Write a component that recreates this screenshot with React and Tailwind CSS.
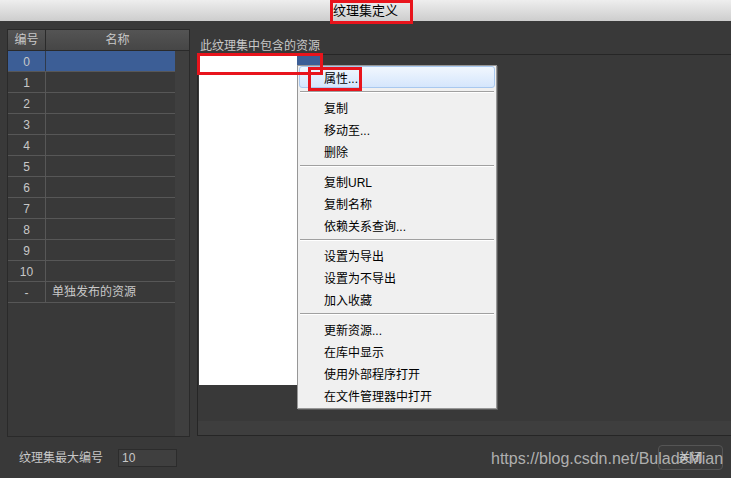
import React from "react";

const font = { fontFamily: '"Liberation Sans", "Noto Sans CJK SC", sans-serif' };

const rows = ["0", "1", "2", "3", "4", "5", "6", "7", "8", "9", "10", "-"];

const menu = [
  ["属性..."],
  ["复制", "移动至...", "删除"],
  ["复制URL", "复制名称", "依赖关系查询..."],
  ["设置为导出", "设置为不导出", "加入收藏"],
  ["更新资源...", "在库中显示", "使用外部程序打开", "在文件管理器中打开"],
];

function Menu() {
  return (
    <div className="absolute left-[297px] top-[65px] w-[200px] bg-[#f0f0f0] border border-[#979797] shadow-[1px_1px_0_#5a5a5a] px-[1px] pb-[2px] text-[12px] text-black flex flex-col">
      {menu.map((group, gi) => (
        <React.Fragment key={gi}>
          {gi > 0 && (
            <div className="h-[8px] flex flex-col justify-center px-[1px]">
              <div className="h-[1px] bg-[#a0a0a0]" />
              <div className="h-[1px] bg-white" />
            </div>
          )}
          {group.map((item, ii) => {
            const hi = gi === 0 && ii === 0;
            return (
              <div
                key={item}
                className={
                  "h-[22px] flex items-center pl-[24px] pt-[3px] leading-none " +
                  (hi
                    ? "bg-gradient-to-b from-[#f1f7fe] to-[#d5e6fc] border border-[#a8c8ef] rounded-[3px]"
                    : "border border-transparent")
                }
              >
                {item}
              </div>
            );
          })}
        </React.Fragment>
      ))}
    </div>
  );
}

export default function App() {
  return (
    <div
      className="relative w-[731px] h-[478px] overflow-hidden bg-[#393939] text-[12px] text-[#c8c8c8] flex flex-col"
      style={font}
    >
      {/* title bar */}
      <div className="h-[21px] bg-gradient-to-b from-[#eeeeee] to-[#cdcdcd] flex items-center justify-center text-[13px] text-black">
        纹理集定义
      </div>

      {/* body */}
      <div className="h-[416px] flex">
        {/* left panel */}
        <div className="ml-[7px] mt-[8px] w-[183px] h-[408px] border border-[#2a2a2a] flex flex-col">
          <div className="h-[21px] flex border-b border-[#2a2a2a] bg-gradient-to-b from-[#545454] to-[#464646]">
            <div className="w-[38px] border-r border-[#2a2a2a] flex items-center justify-center">编号</div>
            <div className="flex-1 flex items-center justify-center">名称</div>
          </div>
          <div className="flex-1 flex">
            <div className="w-[167px] flex flex-col">
              {rows.map((r, i) => (
                <div key={r} className="h-[21px] flex border-b border-[#575757]">
                  <div
                    className={
                      "w-[38px] border-r flex items-center justify-center pt-[1px] " +
                      (i === 0 ? "bg-[#3c5e96] border-[#2f3a4c]" : "border-[#575757]")
                    }
                  >
                    {r}
                  </div>
                  <div className={"flex-1 flex items-center pl-[6px] " + (i === 0 ? "bg-[#3c5e96]" : "")}>
                    {r === "-" ? "单独发布的资源" : ""}
                  </div>
                </div>
              ))}
            </div>
            <div className="flex-1 bg-[#3f3f3f]" />
          </div>
        </div>

        {/* right column */}
        <div className="ml-[7px] mt-[8px] flex-1 flex flex-col">
          <div className="h-[25px] flex items-end pl-[3px] leading-[16px]">此纹理集中包含的资源</div>
          <div className="h-[382px] border-t border-l border-b border-[#262626] flex flex-col">
            <div className="pl-[1px] pt-[1px] flex">
              <div className="w-[98px] h-[329px] bg-white" />
              <div className="w-[24px] h-[11px] bg-[#3c5e96]" />
            </div>
            <div className="flex-1" />
            <div className="h-[14px] bg-[#3e3e3e]" />
          </div>
        </div>
      </div>

      {/* bottom bar */}
      <div className="flex-1 flex items-center pl-[19px] pr-[8px]">
        <span>纹理集最大编号</span>
        <div className="ml-[15px] w-[59px] h-[18px] bg-[#3f3f3f] border border-[#2c2c2c] flex items-center pl-[3px]">
          10
        </div>
        <div className="flex-1" />
        <div className="w-[65px] h-[25px] rounded-[4px] border border-[#555555] bg-[#3b3b3b] flex items-center justify-center">
          关闭
        </div>
      </div>

      <Menu />

      {/* annotation boxes */}
      <div className="absolute left-[330px] top-0 w-[83px] h-[24px] border-[3px] border-[#e8141c]" />
      <div className="absolute left-[197px] top-[53px] w-[126px] h-[22px] border-[3px] border-[#e8141c]" />
      <div className="absolute left-[308px] top-[67px] w-[54px] h-[24px] border-[3px] border-[#e8141c]" />

      {/* watermark */}
      <div className="absolute left-[491px] top-[449px] text-[16px] leading-[20px] text-[#d0d0d0]/80 whitespace-nowrap">
        https://blog.csdn.net/BuladeMian
      </div>
    </div>
  );
}
